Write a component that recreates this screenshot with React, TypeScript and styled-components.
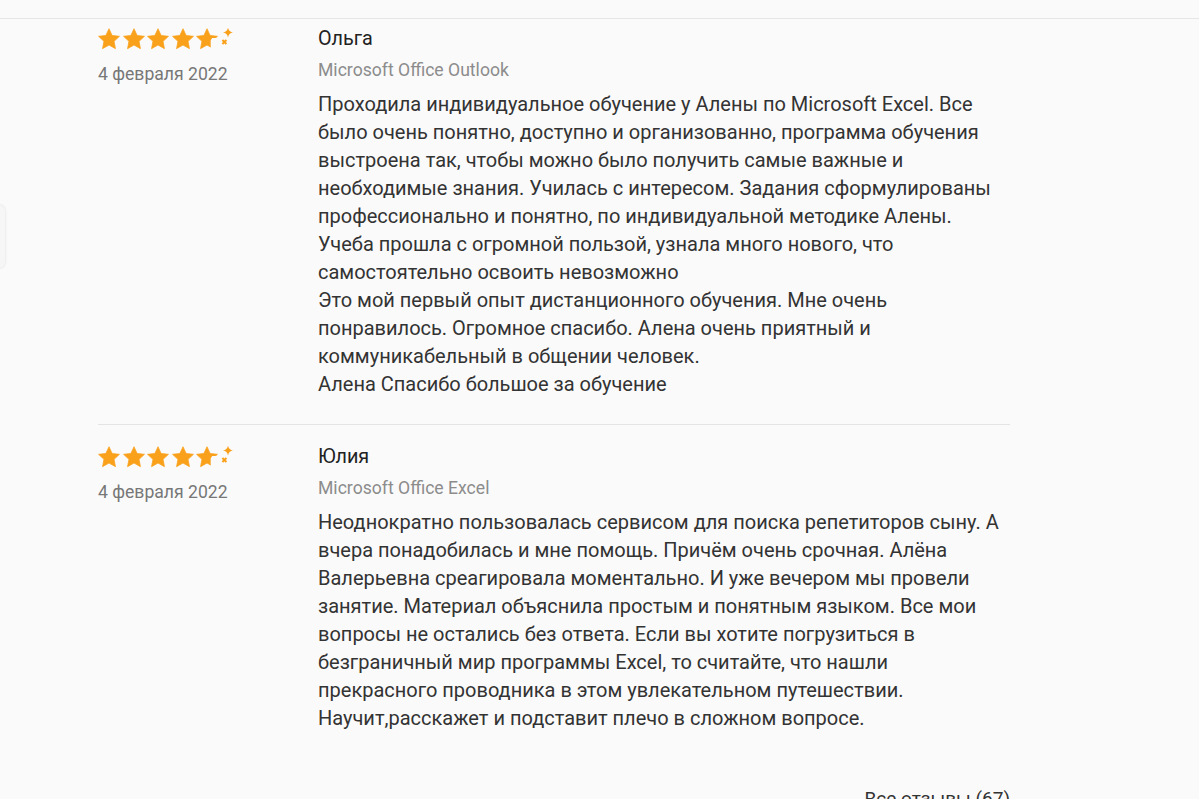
import styled, { createGlobalStyle } from "styled-components";

const GlobalStyle = createGlobalStyle`
  html, body {
    margin: 0;
    padding: 0;
    background: #fafafa;
    font-family: Roboto, "Liberation Sans", Arial, sans-serif;
    overflow: hidden;
  }
`;

const Page = styled.div`
  height: 799px;
  overflow: hidden;
  background: #fafafa;
`;

const TopBar = styled.div`
  height: 18px;
  border-bottom: 1px solid #e6e6e6;
`;

const SideTab = styled.div`
  position: fixed;
  left: -40px;
  top: 205px;
  width: 45px;
  height: 63px;
  border-radius: 6px;
  background: #f6f6f6;
  box-shadow: 0 0 3px rgba(0, 0, 0, 0.12);
`;

const List = styled.div`
  width: 912px;
  margin-left: 98px;
`;

const Review = styled.div<{ $first?: boolean }>`
  display: grid;
  grid-template-columns: 220px 686px;
  padding: ${(p) => (p.$first ? "6px" : "18px")} 0 26px;
  & + & {
    border-top: 1px solid #e4e4e4;
  }
`;

const Side = styled.div`
  padding-top: 3px;
`;

const Stars = styled.div`
  display: flex;
  gap: 2.5px;
  height: 22px;
  align-items: center;
`;

const DateText = styled.div`
  margin-top: 12px;
  font-size: 17.6px;
  line-height: 24px;
  color: #777;
`;

const Main = styled.div``;

const Name = styled.div`
  font-size: 19.8px;
  line-height: 28px;
  color: #222;
`;

const Subject = styled.div`
  margin-top: 5px;
  font-size: 17.6px;
  line-height: 24px;
  color: #8c8c8c;
`;

const Body = styled.div`
  margin-top: 8px;
  font-size: 20px;
  line-height: 28px;
  color: #333;
`;

const Footer = styled.div`
  width: 912px;
  margin-left: 98px;
  margin-top: 27px;
  text-align: right;
  font-size: 19px;
  line-height: 28px;
  color: #333;
`;

const STAR =
  "M12 0.8L15.41 8.11L23.41 9.09L17.52 14.59L19.05 22.51L12 18.6L4.95 22.51L6.48 14.59L0.59 9.09L8.59 8.11Z";
const ORANGE = "#f9a11b";

function Star() {
  return (
    <svg width="22" height="22" viewBox="0 0 24 24">
      <path d={STAR} fill={ORANGE} strokeLinejoin="round" stroke={ORANGE} strokeWidth="0.8" />
    </svg>
  );
}

function HalfStar() {
  return (
    <svg width="40" height="22" viewBox="0 0 40 22">
      <defs>
        <clipPath id="cut">
          <path d="M0 0H24V10.8H17.6L16 13.5V24H0Z" />
        </clipPath>
      </defs>
      <g transform="scale(0.9167)">
        <path
          d={STAR}
          fill={ORANGE}
          stroke={ORANGE}
          strokeWidth="0.8"
          strokeLinejoin="round"
          clipPath="url(#cut)"
        />
      </g>
      <path
        d="M32 -0.5 Q32.7 3.8 37 4.5 Q32.7 5.2 32 9.5 Q31.3 5.2 27 4.5 Q31.3 3.8 32 -0.5Z"
        fill={ORANGE}
      />
      <path d="M26.4 12l4 4M30.4 12l-4 4" stroke={ORANGE} strokeWidth="2" />
    </svg>
  );
}

function Rating() {
  return (
    <Stars>
      <Star />
      <Star />
      <Star />
      <Star />
      <HalfStar />
    </Stars>
  );
}

const reviews = [
  {
    name: "Ольга",
    subject: "Microsoft Office Outlook",
    date: "4 февраля 2022",
    text: [
      "Проходила индивидуальное обучение у Алены по Microsoft Excel. Все было очень понятно, доступно и организованно, программа обучения выстроена так, чтобы можно было получить самые важные и необходимые знания. Училась с интересом. Задания сформулированы профессионально и понятно, по индивидуальной методике Алены.",
      "Учеба прошла с огромной пользой, узнала много нового, что самостоятельно освоить невозможно",
      "Это мой первый опыт дистанционного обучения. Мне очень понравилось. Огромное спасибо. Алена очень приятный и коммуникабельный в общении человек.",
      "Алена Спасибо большое за обучение",
    ],
  },
  {
    name: "Юлия",
    subject: "Microsoft Office Excel",
    date: "4 февраля 2022",
    text: [
      "Неоднократно пользовалась сервисом для поиска репетиторов сыну. А вчера понадобилась и мне помощь. Причём очень срочная. Алёна Валерьевна среагировала моментально. И уже вечером мы провели занятие. Материал объяснила простым и понятным языком. Все мои вопросы не остались без ответа. Если вы хотите погрузиться в безграничный мир программы Excel, то считайте, что нашли прекрасного проводника в этом увлекательном путешествии. Научит,расскажет и подставит плечо в сложном вопросе.",
    ],
  },
];

export default function App() {
  return (
    <Page>
      <GlobalStyle />
      <TopBar />
      <SideTab />
      <List>
        {reviews.map((r, i) => (
          <Review key={r.name} $first={i === 0}>
            <Side>
              <Rating />
              <DateText>{r.date}</DateText>
            </Side>
            <Main>
              <Name>{r.name}</Name>
              <Subject>{r.subject}</Subject>
              <Body>
                {r.text.map((t) => (
                  <div key={t}>{t}</div>
                ))}
              </Body>
            </Main>
          </Review>
        ))}
      </List>
      <Footer>Все отзывы (67)</Footer>
    </Page>
  );
}
